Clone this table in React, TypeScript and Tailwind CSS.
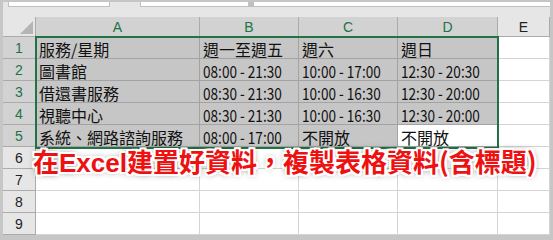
import React from "react";

const COLS = ["A", "B", "C", "D", "E"];
const COL_W = ["w-[164px]", "w-[99px]", "w-[99px]", "w-[100px]", "w-[52px]"];

const DATA: string[][] = [
  ["服務/星期", "週一至週五", "週六", "週日"],
  ["圖書館", "08:00 - 21:30", "10:00 - 17:00", "12:30 - 20:30"],
  ["借還書服務", "08:30 - 21:30", "10:00 - 16:30", "12:30 - 20:00"],
  ["視聽中心", "08:30 - 21:30", "10:00 - 16:30", "12:30 - 20:00"],
  ["系統、網路諮詢服務", "08:00 - 17:00", "不開放", "不開放"],
];

const CJK = { fontFamily: '"Noto Sans CJK TC", "Noto Sans", sans-serif' };
const UI = { fontFamily: '"Liberation Sans", Arial, sans-serif' };

function CellText({ value }: { value: string }) {
  // times are drawn in a tall, narrow face like the original
  if (/^\d/.test(value)) {
    return (
      <span className="block origin-left scale-x-[0.8] whitespace-nowrap text-[17px] leading-[18px]">
        {value}
      </span>
    );
  }
  return <span className="block whitespace-nowrap text-[16px] leading-[18px]">{value}</span>;
}

function Corner() {
  return (
    <div className="relative h-[20px] w-[33px] border-b border-r border-[#ababab] bg-[#e6e6e6]">
      <svg className="absolute bottom-[2px] right-[2px]" width="13" height="13" viewBox="0 0 13 13">
        <polygon points="13,0 13,13 0,13" fill="#b5b5b5" />
      </svg>
    </div>
  );
}

export default function App() {
  return (
    <div className="relative h-[240px] w-[553px] overflow-hidden bg-[#c6c6c6] leading-none" style={CJK}>
      {/* formula bar remnants */}
      <div className="ml-[3px] mr-[3px] mt-[2px] h-[15px] bg-[#e6e6e6]">
        <div className="flex h-[5px]">
          <div className="w-[5px]" />
          <div className="w-[102px] border-b border-l border-r border-[#c0c0c0] bg-white" />
          <div className="w-[30px]" />
          <div className="w-[109px] border-b border-l border-r border-[#c0c0c0] bg-white" />
          <div className="w-[4px] bg-[#c0c0c0]" />
          <div className="flex-1 border-b border-l border-[#c0c0c0] bg-white" />
        </div>
      </div>

      {/* sheet */}
      <div className="ml-[3px] flex w-[547px] flex-col bg-white text-[#111]">
        {/* column headers */}
        <div className="flex h-[20px]">
          <Corner />
          {COLS.map((c, i) => (
            <div
              key={c}
              className={[
                "flex h-[20px] items-center justify-center border-b border-r border-[#ababab] text-[14px]",
                COL_W[i],
                i < 4 ? "bg-[#d2d2d2] text-[#217346]" : "bg-[#e6e6e6] text-[#222]",
              ].join(" ")}
              style={UI}
            >
              {c}
            </div>
          ))}
        </div>

        {/* rows */}
        {Array.from({ length: 9 }).map((_, r) => {
          const selectedRow = r < 5;
          return (
            <div key={r} className="flex h-[22px]">
              <div
                className={[
                  "flex h-[22px] w-[33px] items-center justify-center border-b border-r border-[#ababab] text-[14px]",
                  selectedRow ? "bg-[#d2d2d2] text-[#217346]" : "bg-[#e6e6e6] text-[#222]",
                ].join(" ")}
                style={UI}
              >
                {r + 1}
              </div>
              {COLS.map((c, i) => {
                const inSel = selectedRow && i < 4;
                const active = r === 4 && i === 3;
                const value = selectedRow && i < 4 ? DATA[r][i] : "";
                return (
                  <div
                    key={c}
                    className={[
                      "flex h-[22px] items-end border-b border-r pl-[3px]",
                      COL_W[i],
                      inSel ? "border-[#a3a3a3]" : "border-[#d4d4d4]",
                      inSel && !active ? "bg-[#c6c6c6]" : "bg-white",
                    ].join(" ")}
                  >
                    {value && <CellText value={value} />}
                  </div>
                );
              })}
            </div>
          );
        })}
      </div>

      {/* selection outline */}
      <div className="pointer-events-none absolute left-[35px] top-[36px] h-[113px] w-[464px] border-2 border-[#217346]" />

      {/* annotation */}
      <div
        className="absolute left-[33px] top-[146px] whitespace-nowrap text-[26px] font-bold leading-[30px] text-[#ee1111] [text-shadow:2px_0_0_#fff,-2px_0_0_#fff,0_2px_0_#fff,0_-2px_0_#fff,2px_2px_0_#fff,-2px_-2px_0_#fff,2px_-2px_0_#fff,-2px_2px_0_#fff,0_0_6px_rgba(0,0,0,0.7)]"
      >
        在<span style={UI}>Excel</span>建置好資料，複製表格資料(含標題)
      </div>
    </div>
  );
}
